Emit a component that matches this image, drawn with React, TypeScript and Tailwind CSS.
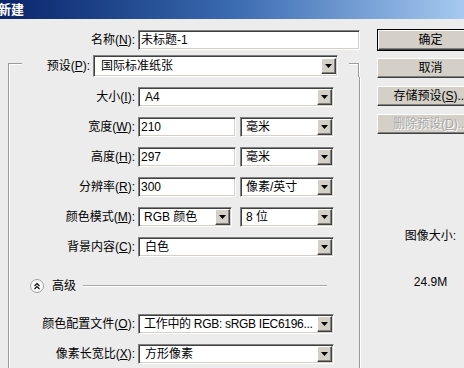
import React from 'react';

const sunken =
  'bg-white border border-t-[#808080] border-l-[#808080] border-r-white border-b-white shadow-[inset_1px_1px_0_#404040,inset_-1px_-1px_0_#d4d0c8]';

const raised =
  'bg-[#d4d0c8] border border-t-white border-l-white border-r-[#404040] border-b-[#404040] shadow-[inset_-1px_-1px_0_#808080]';

// small mnemonic-style label, e.g. 名称(N):
const Label = ({ text, k, className = '' }: { text: string; k: string; className?: string }) => (
  <span className={`whitespace-nowrap text-right ${className}`}>
    {text}(<span className="underline underline-offset-[1px]">{k}</span>):
  </span>
);

const Arrow = () => (
  <div className={`flex h-[16px] w-[15px] shrink-0 items-center justify-center ${raised}`}>
    <svg width="7" height="4" viewBox="0 0 7 4">
      <path d="M0 0h7L3.5 4z" fill="#000" />
    </svg>
  </div>
);

const Select = ({
  value,
  className,
  pad = 'pl-[6px]',
}: {
  value: string;
  className: string;
  pad?: string;
}) => (
  <div className={`flex h-[20px] items-center justify-between pr-[1px] ${sunken} ${className}`}>
    <span className={`min-w-0 overflow-hidden whitespace-nowrap ${pad}`}>{value}</span>
    <Arrow />
  </div>
);

const TextBox = ({ value, className }: { value: string; className: string }) => (
  <div className={`flex h-[20px] items-center pl-[2px] ${sunken} ${className}`}>
    <span>{value}</span>
  </div>
);

const Row = ({ text, k, children, className = '' }: { text: string; k: string; children: React.ReactNode; className?: string }) => (
  <div className={`flex h-[20px] items-center ${className}`}>
    <Label text={text} k={k} className="w-[126px]" />
    <div className="ml-[3px] flex gap-[6px]">{children}</div>
  </div>
);

const Button = ({ children, def = false, disabled = false, className = '' }: { children: React.ReactNode; def?: boolean; disabled?: boolean; className?: string }) => (
  <div className={`${def ? 'border border-black' : ''} ${className}`}>
    <div
      className={`flex h-[20px] items-center justify-center ${raised} ${
        disabled ? 'text-[#a8a8a8] [text-shadow:1px_1px_0_#fff]' : 'text-black'
      }`}
    >
      {children}
    </div>
  </div>
);

export default function App() {
  return (
    <div className="h-[368px] w-[464px] overflow-hidden bg-[#ececec] font-['Liberation_Sans','Noto_Sans_CJK_SC',sans-serif] text-[12px] leading-[14px] text-black">
      {/* title bar */}
      <div className="flex h-[19px] items-center bg-gradient-to-r from-[#0a246a] via-[#3a6ab0] to-[#a6caf0]">
        <span className="ml-[-2px] text-[13px] font-bold text-white">新建</span>
      </div>

      <div className="flex pt-[11px]">
        {/* left: fields */}
        <div className="w-[360px] shrink-0">
          <div className="flex h-[19px] items-center">
            <Label text="名称" k="N" className="w-[135px]" />
            <TextBox value="未标题-1" className="ml-[3px] h-[19px] w-[222px]" />
          </div>

          {/* group box */}
          <div className="ml-[8px] mt-[6px] w-[352px]">
            <div className="flex h-[22px]">
              <div className="h-[14px] w-[14px] shrink-0 self-end border-l border-t border-[#9a9a9a] shadow-[inset_1px_1px_0_#fff]" />
              <Label text="预设" k="P" className="w-[68px] self-center" />
              <Select value="国际标准纸张" className="ml-[3px] h-[22px] w-[245px] pl-[1px]" />
              <div className="w-[11px]" />
              <div className="h-[14px] w-[10px] shrink-0 self-end border-r border-t border-[#9a9a9a] shadow-[inset_0_1px_0_#fff,1px_0_0_#fff]" />
            </div>

            <div className="flex flex-col border-l border-r border-[#9a9a9a] pb-[40px] pt-[10px] shadow-[inset_1px_0_0_#fff,1px_0_0_#fff]">
              <div className="flex flex-col gap-[10px]">
                <Row text="大小" k="I">
                  <Select value="A4" className="w-[196px]" />
                </Row>
                <Row text="宽度" k="W">
                  <TextBox value="210" className="w-[98px]" />
                  <Select value="毫米" className="-ml-[2px] w-[94px]" pad="pl-[5px]" />
                </Row>
                <Row text="高度" k="H">
                  <TextBox value="297" className="w-[98px]" />
                  <Select value="毫米" className="-ml-[2px] w-[94px]" pad="pl-[5px]" />
                </Row>
                <Row text="分辨率" k="R">
                  <TextBox value="300" className="w-[98px]" />
                  <Select value="像素/英寸" className="-ml-[2px] w-[94px]" pad="pl-[5px]" />
                </Row>
                <Row text="颜色模式" k="M">
                  <Select value="RGB 颜色" className="w-[94px]" pad="pl-[5px]" />
                  <Select value="8 位" className="ml-[2px] w-[94px]" pad="pl-[5px]" />
                </Row>
                <Row text="背景内容" k="C">
                  <Select value="白色" className="w-[196px]" />
                </Row>
              </div>

              {/* advanced */}
              <div className="ml-[21px] mt-[23px] flex h-[12px] items-center">
                <svg width="14" height="14" viewBox="0 0 14 14" className="shrink-0">
                  <circle cx="7" cy="7" r="6.5" fill="#fafafa" stroke="#a0a0a0" />
                  <path d="M4.5 7l2.5-2.5L9.5 7M4.5 10l2.5-2.5L9.5 10" fill="none" stroke="#000" strokeWidth="1.1" />
                </svg>
                <span className="ml-[8px]">高级</span>
                <div className="ml-[7px] h-[2px] w-[244px] border-b border-t border-b-white border-t-[#a8a8a8]" />
              </div>

              <div className="mt-[22px] flex flex-col gap-[10px]">
                <Row text="颜色配置文件" k="O">
                  <Select value="工作中的 RGB: sRGB IEC6196..." className="w-[196px] tracking-[-0.3px]" pad="pl-[5px]" />
                </Row>
                <Row text="像素长宽比" k="X">
                  <Select value="方形像素" className="w-[196px]" />
                </Row>
              </div>
            </div>
          </div>
        </div>

        {/* right: buttons */}
        <div className="ml-[17px] flex w-[107px] shrink-0 flex-col">
          <Button def className="-mt-[1px]">确定</Button>
          <Button className="mt-[7px]">取消</Button>
          <Button className="mt-[8px]">
            <span>存储预设(<span className="underline underline-offset-[1px]">S</span>)...</span>
          </Button>
          <Button disabled className="mt-[8px]">
            <span>删除预设(<span className="underline underline-offset-[1px]">D</span>)...</span>
          </Button>
          <div className="mt-[95px] text-center">图像大小:</div>
          <div className="mt-[32px] text-center">24.9M</div>
        </div>
      </div>
    </div>
  );
}
